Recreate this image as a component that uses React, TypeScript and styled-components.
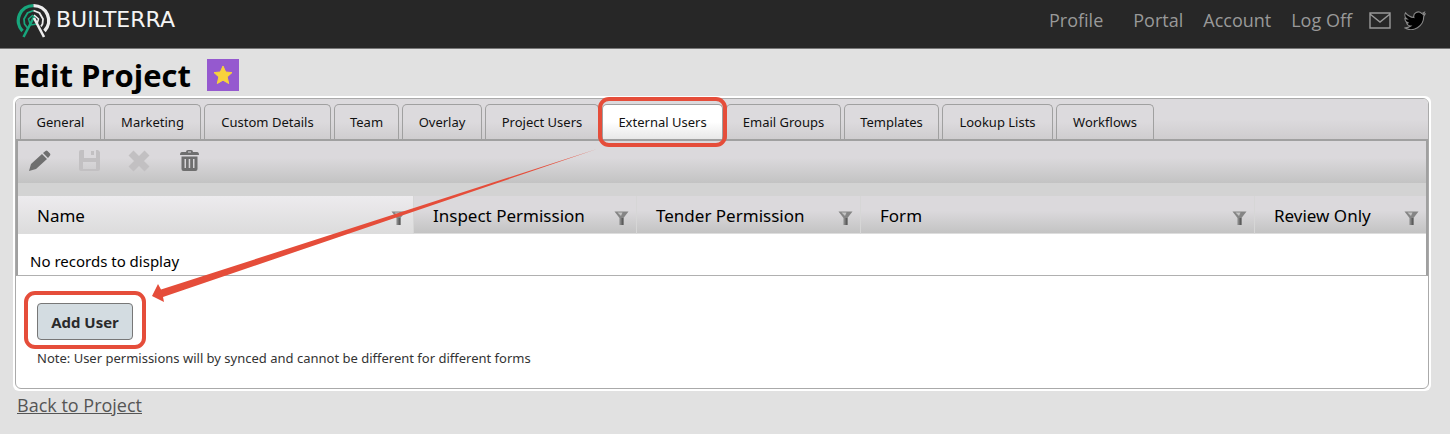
import React from "react";
import styled, { createGlobalStyle } from "styled-components";

const Global = createGlobalStyle`
  * { box-sizing: border-box; }
  body {
    margin: 0;
    background: #e1e1e1;
    font-family: "Open Sans", "Noto Sans", sans-serif;
    color: #000;
  }
`;

const uiFont = `"Noto Sans", "Open Sans", sans-serif`;
const red = "#e54d3a";

const Header = styled.header`
  display: flex;
  align-items: center;
  justify-content: space-between;
  height: 49px;
  padding: 0 24px 8px 16px;
  background: #272727;
  border-bottom: 1px solid #777;
`;

const Brand = styled.a`
  display: flex;
  align-items: center;
  gap: 4px;
  color: #f4f4f4;
  font: 400 22px/24px "DejaVu Sans", sans-serif;
  text-decoration: none;
`;

const Nav = styled.nav`
  display: flex;
  align-items: center;
  gap: 20px;
`;

const NavLink = styled.a<{ $spaced?: boolean }>`
  color: #999;
  font-size: 18px;
  line-height: 24px;
  text-decoration: none;
  margin-right: ${(p) => (p.$spaced ? 10 : 0)}px;
`;

const Social = styled.div`
  display: flex;
  align-items: center;
  gap: 13px;
  margin-left: -3px;
  a { display: flex; }
`;

const Main = styled.main`
  padding: 10px 19px 16px 13px;
`;

const TitleRow = styled.div`
  display: flex;
  align-items: center;
  gap: 16px;
  height: 32px;
  margin-bottom: 5px;
`;

const Title = styled.h1`
  margin: 0;
  font-size: 31px;
  line-height: 36px;
  font-weight: 700;
`;

const StarButton = styled.button`
  display: flex;
  align-items: center;
  justify-content: center;
  width: 32px;
  height: 32px;
  padding: 0;
  border: 0;
  background: #9559cf;
`;

const Panel = styled.section`
  position: relative;
  padding: 2px;
  border-radius: 6px;
  background: #fff;
`;

const PanelInner = styled.div`
  border: 1px solid #aaa;
  border-radius: 6px;
`;

const TabStrip = styled.div`
  display: flex;
  gap: 3px;
  padding: 5px 4px 0;
  border-radius: 5px 5px 0 0;
  background: linear-gradient(#dcdadd 50%, #cfcdcf);
`;

const Tab = styled.button<{ $active?: boolean; $width: number }>`
  position: relative;
  flex: 0 0 ${(p) => p.$width}px;
  height: 35px;
  padding: 0;
  border: 1px solid #a0a0a0;
  border-bottom: 0;
  border-radius: 5px 5px 0 0;
  background: ${(p) => (p.$active ? "linear-gradient(#fff 50%, #e8e8e8)" : "linear-gradient(#dcdadd 50%, #cfcdcf)")};
  color: #111;
  font: 13px/20px ${uiFont};
  white-space: nowrap;
`;

const Callout = styled.span<{ $gap: string }>`
  position: absolute;
  inset: ${(p) => p.$gap};
  z-index: 2;
  border: 4px solid ${red};
  border-radius: 11px;
  pointer-events: none;
`;

const Grid = styled.div`
  border: 2px solid #a0a0a0;
  border-bottom: 1px solid #b0b0b0;
`;

const Toolbar = styled.div`
  display: flex;
  align-items: center;
  gap: 27px;
  height: 42px;
  padding: 0 10px 2px;
  background: linear-gradient(#dbd9dc 40%, #c3c3c3);
`;

const ToolButton = styled.button`
  display: flex;
  padding: 0;
  border: 0;
  background: none;
  color: #6f6f6f;
  &:disabled { color: #c2c0c2; }
`;

const Table = styled.table`
  width: 100%;
  border-collapse: separate;
  border-spacing: 0;
  table-layout: fixed;
  border-top: 13px solid #d3d3d3;
  font-family: ${uiFont};
`;

const Col = styled.col<{ $width?: number }>`
  width: ${(p) => (p.$width ? `${p.$width}px` : "auto")};
`;

const Th = styled.th<{ $sorted?: boolean }>`
  height: 38px;
  padding: 3px 7px 0 19px;
  border-bottom: 1px solid #ddd;
  border-right: 1px solid #d6d6d6;
  background: ${(p) => (p.$sorted ? "linear-gradient(#edebee, #dcdcdc)" : "linear-gradient(#dbd9dc 40%, #c3c3c3)")};
  font-size: 17px;
  line-height: 24px;
  font-weight: 400;
  text-align: left;
  &:last-child { border-right: 0; }
`;

const ThInner = styled.div`
  display: flex;
  align-items: center;
  justify-content: space-between;
  white-space: nowrap;
`;

const FilterButton = styled.button`
  display: flex;
  padding: 4px 0 0;
  border: 0;
  background: none;
`;

const Empty = styled.td`
  height: 41px;
  padding: 13px 12px 0;
  background: #fff;
  font-size: 15px;
  line-height: 24px;
`;

const Footer = styled.div`
  padding: 27px 21px 20px;
`;

const AddWrap = styled.div`
  position: relative;
  display: inline-flex;
`;

const AddButton = styled.button`
  width: 96px;
  height: 37px;
  padding: 0;
  border: 1px solid #777;
  border-radius: 4px;
  background: #d3dce1;
  color: #2a2a2a;
  font: 700 15px/20px "Open Sans", sans-serif;
`;

const Note = styled.p`
  margin: 8px 0 0;
  color: #333;
  font: 13px/20px ${uiFont};
`;

const Arrow = styled.svg`
  position: absolute;
  left: 138px;
  top: 52px;
  z-index: 1;
  pointer-events: none;
`;

const Back = styled.a`
  display: inline-block;
  margin: 2px 4px 0;
  color: #555;
  font-size: 18px;
  line-height: 24px;
  text-decoration: underline;
`;

const tabs = [
  { label: "General", width: 81 },
  { label: "Marketing", width: 97 },
  { label: "Custom Details", width: 127 },
  { label: "Team", width: 65 },
  { label: "Overlay", width: 80 },
  { label: "Project Users", width: 114 },
  { label: "External Users", width: 121, active: true },
  { label: "Email Groups", width: 115 },
  { label: "Templates", width: 95 },
  { label: "Lookup Lists", width: 111 },
  { label: "Workflows", width: 98 },
];

const columns: { label: string; width?: number }[] = [
  { label: "Name", width: 396 },
  { label: "Inspect Permission", width: 223 },
  { label: "Tender Permission", width: 224 },
  { label: "Form" },
  { label: "Review Only", width: 171 },
];

const LogoMark = () => (
  <svg width="36" height="36" viewBox="0 0 36 36" fill="none">
    <g stroke="#17a67c">
      <path d="M17.500 3.600A15 15 0 0 0 6.500 29" strokeWidth="3.400" />
      <path d="M17.500 8.500L11.500 11L8 17L8.500 22L12 26.500" strokeWidth="1.800" />
      <path d="M7.500 35L18.500 14" strokeWidth="2.600" />
      <path d="M17 13L12.500 17L14 22" strokeWidth="1.500" />
      <path d="M14 23L21 22" strokeWidth="1.500" />
    </g>
    <g stroke="#ececec">
      <path d="M17.500 3.600A15 15 0 0 1 28.500 29" strokeWidth="3.400" />
      <path d="M17.500 8.500L23.500 11L27 17L26.500 22L25 24.500" strokeWidth="1.800" />
      <path d="M18 13L22.500 17L21 22" strokeWidth="1.500" />
      <path d="M18 16L28 35" strokeWidth="2.600" />
    </g>
  </svg>
);

const Funnel = () => (
  <svg width="15" height="14" viewBox="0 0 15 14">
    <path d="M0.500 0.500h14L9.500 7V14h-4V7z" fill="#858585" />
    <path d="M3.500 1.500h5L7 5z" fill="#c4c4c4" />
    <path d="M7.500 7h2v7h-2z" fill="#5c5c5c" />
  </svg>
);

export default function App() {
  return (
    <>
      <Global />
      <Header>
        <Brand href="#"><LogoMark />BUILTERRA</Brand>
        <Nav>
          <NavLink href="#" $spaced>Profile</NavLink>
          <NavLink href="#">Portal</NavLink>
          <NavLink href="#">Account</NavLink>
          <NavLink href="#">Log Off</NavLink>
          <Social>
            <a href="#" aria-label="Email">
              <svg width="22" height="17" viewBox="0 0 22 17" fill="none" stroke="#999" strokeWidth="1.4">
                <path d="M1 1h20v15H1zM1 2l10 8 10-8" />
              </svg>
            </a>
            <a href="#" aria-label="Twitter">
              <svg width="22" height="19" viewBox="0 2 24 20" fill="#000" stroke="#888" strokeWidth="1.2">
                <path d="M23 5a10 10 0 0 1-2.8.8 4.900 4.900 0 0 0 2.100-2.700 10 10 0 0 1-3.100 1.200 4.900 4.900 0 0 0-8.400 4.500A14 14 0 0 1 1.700 3.600a4.900 4.900 0 0 0 1.500 6.600 5 5 0 0 1-2.200-.6 4.900 4.900 0 0 0 4 4.900 5 5 0 0 1-2.200.1 4.900 4.900 0 0 0 4.600 3.400A10 10 0 0 1 .5 20 14 14 0 0 0 21.500 7.500 10 10 0 0 0 23 5z" />
              </svg>
            </a>
          </Social>
        </Nav>
      </Header>
      <Main>
        <TitleRow>
          <Title>Edit Project</Title>
          <StarButton aria-label="Favourite">
            <svg width="20" height="20" viewBox="0 0 20 20">
              <path d="M10 1l2.700 6 6.300.6-4.800 4.300 1.500 6.600L10 15.200 4.300 18.500l1.500-6.600L1 7.600 7.300 7z" fill="#f8d23c" stroke="#f8d23c" strokeLinejoin="round" />
            </svg>
          </StarButton>
        </TitleRow>
        <Panel>
          <PanelInner>
            <TabStrip role="tablist">
              {tabs.map((t) => (
                <Tab key={t.label} role="tab" aria-selected={!!t.active} $active={t.active} $width={t.width}>
                  {t.label}
                  {t.active && <Callout $gap="-8px -5px" />}
                </Tab>
              ))}
            </TabStrip>
            <Grid>
              <Toolbar>
                <ToolButton aria-label="Edit">
                  <svg width="24" height="22" viewBox="0 0 24 22" fill="currentColor">
                    <path d="M1 21l2-7L14 4l5 5L8 19zM15 3l2.500-2q1-.8 2 0L22 3.500q.8 1 0 2L20 8z" />
                  </svg>
                </ToolButton>
                <ToolButton aria-label="Save" disabled>
                  <svg width="22" height="22" viewBox="0 0 22 22" fill="currentColor" fillRule="evenodd">
                    <path d="M2 0h3v8h12V0h2l2 2v17q0 2-2 2H2q-2 0-2-2V2q0-2 2-2zM4 12v7h13v-7zM12 1h3v4h-3z" />
                  </svg>
                </ToolButton>
                <ToolButton aria-label="Cancel" disabled>
                  <svg width="22" height="22" viewBox="0 0 22 22" stroke="currentColor" strokeWidth="7" fill="none">
                    <path d="M3 3l16 16M19 3L3 19" />
                  </svg>
                </ToolButton>
                <ToolButton aria-label="Delete">
                  <svg width="24" height="22" viewBox="-2 0 24 22" fill="currentColor" fillRule="evenodd">
                    <path d="M7 2q0-2 2-2h3q2 0 2 2h4q2 0 2 3H1q0-3 2-3zM9 1.500v1h3v-1zM2.500 6.500h16V19q0 2-2 2h-12q-2 0-2-2zM5.500 9v9h1.500V9zM9.700 9v9h1.500V9zM14 9v9h1.500V9z" />
                  </svg>
                </ToolButton>
              </Toolbar>
              <Table>
                <colgroup>
                  {columns.map((c) => <Col key={c.label} $width={c.width} />)}
                </colgroup>
                <thead>
                  <tr>
                    {columns.map((c, i) => (
                      <Th key={c.label} scope="col" $sorted={i === 0}>
                        <ThInner>
                          {c.label}
                          <FilterButton aria-label={`Filter ${c.label}`}><Funnel /></FilterButton>
                        </ThInner>
                      </Th>
                    ))}
                  </tr>
                </thead>
                <tbody>
                  <tr><Empty colSpan={5}>No records to display</Empty></tr>
                </tbody>
              </Table>
            </Grid>
            <Footer>
              <AddWrap>
                <AddButton>Add User</AddButton>
                <Callout $gap="-12px -13px -9px" />
              </AddWrap>
              <Note>Note: User permissions will by synced and cannot be different for different forms</Note>
            </Footer>
          </PanelInner>
          <Arrow width="448" height="156" viewBox="0 0 448 156" fill={red} aria-hidden="true">
            <path d="M446 1L10 141.500L7 136L1 148L13 154L12 149Z" />
          </Arrow>
        </Panel>
        <Back href="#">Back to Project</Back>
      </Main>
    </>
  );
}
